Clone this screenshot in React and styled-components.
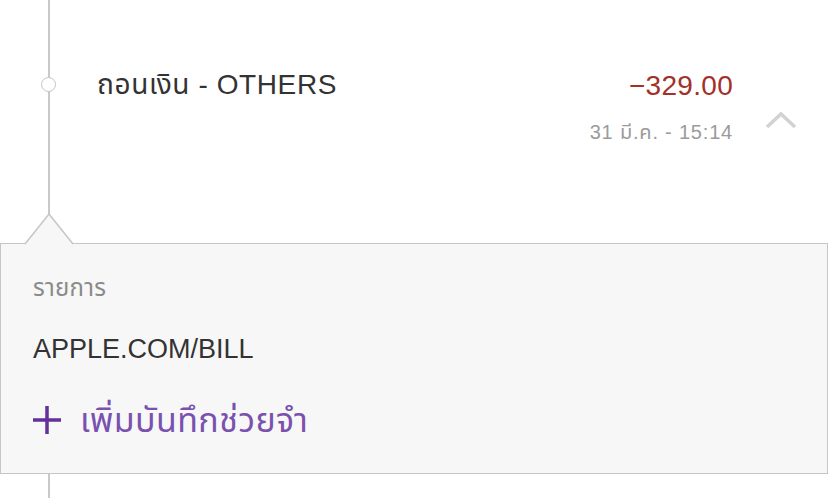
import React from 'react'
import styled, { createGlobalStyle } from 'styled-components'

const GlobalStyle = createGlobalStyle`
  html, body {
    margin: 0;
    padding: 0;
    background: #ffffff;
    overflow: hidden;
  }
  body {
    font-family: "Liberation Sans", "Noto Sans Thai", "Noto Sans", sans-serif;
  }
`

const Page = styled.div`
  width: 828px;
  height: 498px;
  overflow: hidden;
  background:
    linear-gradient(to right, transparent 48px, #c9c9c9 48px, #c9c9c9 50px, transparent 50px),
    #ffffff;
`

const Entry = styled.div`
  display: flex;
  align-items: flex-start;
  height: 243px;
  box-sizing: border-box;
  padding-top: 68px;
`

const NodeCol = styled.div`
  width: 97px;
  flex: none;
  padding-top: 9px;
`

const Node = styled.div`
  width: 13px;
  height: 13px;
  margin-left: 41px;
  border: 1.5px solid #c4c4c4;
  border-radius: 50%;
  background: #ffffff;
`

const Title = styled.div`
  flex: 1;
  font-size: 28px;
  line-height: 34px;
  letter-spacing: 0.6px;
  color: #333333;
`

const Figures = styled.div`
  display: flex;
  flex-direction: column;
  align-items: flex-end;
`

const Amount = styled.div`
  font-size: 28px;
  line-height: 36px;
  letter-spacing: 0.3px;
  color: #a2312a;
`

const Stamp = styled.div`
  margin-top: 16px;
  font-size: 20px;
  line-height: 24px;
  letter-spacing: 0.8px;
  color: #9b9b9b;
`

const ToggleCol = styled.div`
  width: 95px;
  flex: none;
  display: flex;
  justify-content: center;
  padding-top: 42px;
`

const Panel = styled.div`
  position: relative;
  height: 231px;
  box-sizing: border-box;
  border: 1px solid #c6c6c6;
  background: #f7f7f7;
  padding: 30px 32px 0;
`

const Pointer = styled.svg`
  position: absolute;
  left: 23px;
  top: -31px;
  display: block;
`

const Label = styled.div`
  font-size: 24px;
  line-height: 28px;
  letter-spacing: 0.3px;
  color: #8a8a8a;
`

const Merchant = styled.div`
  margin-top: 32px;
  font-size: 27px;
  line-height: 30px;
  color: #333333;
`

const AddNote = styled.div`
  margin-top: 36px;
  display: flex;
  align-items: center;
  gap: 19px;
  font-size: 34px;
  line-height: 40px;
  letter-spacing: 0.4px;
  color: #7a51ae;
`

function ChevronUp () {
  return (
    <svg width="32" height="20" viewBox="0 0 32 20">
      <polyline points="2,17 16,4 30,17" fill="none" stroke="#d2d2d2" strokeWidth="3.5" />
    </svg>
  )
}

function Plus () {
  return (
    <svg width="28" height="28" viewBox="0 0 28 28">
      <rect x="0" y="12.25" width="28" height="3.5" fill="#62319a" />
      <rect x="12.25" y="0" width="3.5" height="28" fill="#62319a" />
    </svg>
  )
}

export default function App () {
  return (
    <Page>
      <GlobalStyle />
      <Entry>
        <NodeCol>
          <Node />
        </NodeCol>
        <Title>ถอนเงิน - OTHERS</Title>
        <Figures>
          <Amount>−329.00</Amount>
          <Stamp>31 มี.ค. - 15:14</Stamp>
        </Figures>
        <ToggleCol>
          <ChevronUp />
        </ToggleCol>
      </Entry>
      <Panel>
        <Pointer width="50" height="32" viewBox="0 0 50 32">
          <polygon points="1,31.5 25,1 49,31.5" fill="#f7f7f7" />
          <polyline points="1,31 25,1 49,31" fill="none" stroke="#c6c6c6" strokeWidth="1.5" />
        </Pointer>
        <Label>รายการ</Label>
        <Merchant>APPLE.COM/BILL</Merchant>
        <AddNote>
          <Plus />
          <span>เพิ่มบันทึกช่วยจำ</span>
        </AddNote>
      </Panel>
    </Page>
  )
}
